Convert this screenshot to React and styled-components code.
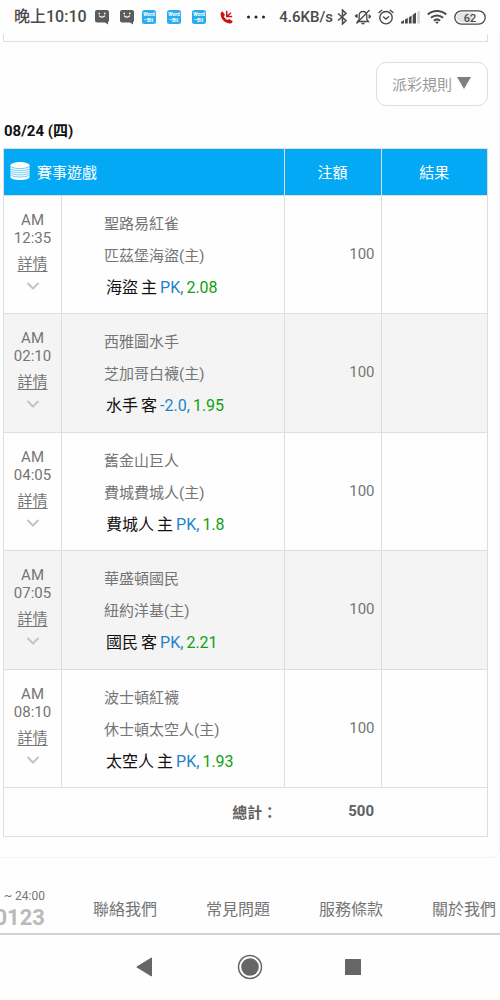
import React from "react";
import styled, { createGlobalStyle } from "styled-components";

const GlobalStyle = createGlobalStyle`
    * {
        box-sizing: border-box;
    }

    body {
        margin: 0;
        background: #fefefe;
        color: #757575;
        font-family: Roboto, "Noto Sans CJK TC", sans-serif;
        font-size: 15px;
    }

    svg {
        display: block;
        flex: none;
    }
`;

const StatusBar = styled.header`
    display: flex;
    align-items: center;
    justify-content: space-between;
    height: 34px;
    padding: 0 14px;
    color: #4a4a4a;
    font-weight: 500;
    white-space: nowrap;
`;

const StatusGroup = styled.div`
    display: flex;
    align-items: center;
    gap: ${(props) => props.$gap}px;
`;

const Clock = styled.span`
    font-size: 16px;
    line-height: 20px;
`;

const Speed = styled.span`
    font-size: 15px;
    line-height: 20px;
`;

const Card = styled.main`
    padding: 0 11px 20px 3px;
    border-right: 1px solid #f6f6f6;
    border-bottom: 1px solid #f3f3f3;
    border-radius: 0 0 8px 0;
`;

const PreviousPanel = styled.div`
    height: 8px;
    border: 1px solid #dedede;
    border-top: none;
`;

const Toolbar = styled.div`
    display: flex;
    justify-content: flex-end;
    padding: 20px 0 14px;
`;

const RulesButton = styled.button`
    display: flex;
    align-items: center;
    gap: 5px;
    height: 44px;
    padding: 0 16px 2px 15px;
    border: 1px solid #dedede;
    border-radius: 10px;
    background: #fff;
    color: #999;
    font: inherit;
    cursor: pointer;
`;

const DateTitle = styled.h2`
    margin: 0;
    padding: 0 0 6px 1px;
    color: #111;
    font-size: 15px;
    font-weight: 700;
    line-height: 22px;
`;

const BetTable = styled.table`
    width: 100%;
    table-layout: fixed;
    border: 1px solid #dedede;
    border-collapse: collapse;

    th,
    td {
        padding: 0;
        border: 1px solid #dedede;
    }
`;

const Column = styled.col`
    width: ${(props) => props.$width};
`;

const HeadCell = styled.th`
    && {
        height: 47px;
        padding-bottom: 2px;
    }

    background: #03a9f4;
    color: #fff;
    font-weight: 400;
`;

const HeadTitle = styled.div`
    display: flex;
    align-items: center;
    gap: 7px;
    padding-left: 6px;
`;

const BetRow = styled.tr`
    height: 118px;
    vertical-align: top;

    &:nth-child(even) {
        height: 119px;
        background: #f4f4f4;
    }
`;

const TimeBox = styled.div`
    display: flex;
    flex-direction: column;
    align-items: center;
    padding-top: 15px;
    line-height: 18px;
`;

const DetailLink = styled.a`
    display: flex;
    flex-direction: column;
    align-items: center;
    gap: 7px;
    padding-top: 6px;
    color: #757575;
    line-height: 22px;
    text-decoration: underline;
    text-underline-offset: 2px;
`;

const Match = styled.div`
    padding: 12px 0 0 42px;
    line-height: 32px;
`;

const Pick = styled.div`
    display: flex;
    gap: 3px;
    padding-left: 2px;
    color: #111;
    font-size: 16px;
`;

const Handicap = styled.span`
    color: #1a84cb;
`;

const Odds = styled.span`
    color: #12a012;
`;

const Amount = styled.div`
    padding: 48px 6px 0 0;
    line-height: 20px;
    text-align: right;
`;

const TotalRow = styled.tr`
    height: 49px;
    color: #616161;
    font-weight: 700;
    text-align: right;

    && td {
        padding: 0 7px 2px 0;
        border-left: none;
        border-right: none;
    }

    && td:first-child {
        border-left: 1px solid #dedede;
    }

    && td:last-child {
        border-right: 1px solid #dedede;
    }
`;

const Footer = styled.footer`
    display: flex;
    align-items: center;
    gap: 48px;
    height: 77px;
    padding: 24px 4px 0 0;
    border-bottom: 2px solid #d2d2d2;
`;

const Hotline = styled.div`
    display: flex;
    flex-direction: column;
    align-items: flex-end;
    flex: none;
    width: 45px;
    overflow: hidden;
    white-space: nowrap;
`;

const Hours = styled.span`
    font-size: 12px;
    line-height: 20px;
`;

const Phone = styled.strong`
    color: #bababa;
    font-size: 22px;
    line-height: 24px;
`;

const FooterLinks = styled.nav`
    display: flex;
    flex: 1;
    justify-content: space-between;
    white-space: nowrap;
`;

const FooterLink = styled.a`
    color: #757575;
    font-size: 16px;
    text-decoration: none;
`;

const SystemNav = styled.nav`
    display: flex;
    align-items: center;
    justify-content: center;
    gap: 78px;
    height: 65px;
    padding-bottom: 2px;
`;

const NavButton = styled.button`
    padding: 0;
    border: none;
    background: none;
    color: #666;
    cursor: pointer;
`;

const PhoneIcon = styled.svg`
    margin-left: 7px;
`;

const bets = [
    {
        time: "12:35",
        away: "聖路易紅雀",
        home: "匹茲堡海盜(主)",
        team: "海盜",
        side: "主",
        handicap: "PK,",
        odds: "2.08"
    },
    {
        time: "02:10",
        away: "西雅圖水手",
        home: "芝加哥白襪(主)",
        team: "水手",
        side: "客",
        handicap: "-2.0,",
        odds: "1.95"
    },
    {
        time: "04:05",
        away: "舊金山巨人",
        home: "費城費城人(主)",
        team: "費城人",
        side: "主",
        handicap: "PK,",
        odds: "1.8"
    },
    {
        time: "07:05",
        away: "華盛頓國民",
        home: "紐約洋基(主)",
        team: "國民",
        side: "客",
        handicap: "PK,",
        odds: "2.21"
    },
    {
        time: "08:10",
        away: "波士頓紅襪",
        home: "休士頓太空人(主)",
        team: "太空人",
        side: "主",
        handicap: "PK,",
        odds: "1.93"
    }
];

const footerLinks = ["聯絡我們", "常見問題", "服務條款", "關於我們"];

function ChatIcon() {
    return (
        <svg width="16" height="16" viewBox="0 0 16 16">
            <path
                d="M3 1h10a2 2 0 0 1 2 2v8.500a2 2 0 0 1-1 1.700V15.500L11 13.500H3a2 2 0 0 1-2-2V3a2 2 0 0 1 2-2z"
                fill="#5c5c5c"
            />
            <path
                d="M4.500 4.500h1.500M10 4.500h1.500M5.200 6.700c1.200 2 4.400 2 5.600 0"
                fill="none"
                stroke="#fff"
                strokeWidth="1.300"
            />
        </svg>
    );
}

function WordBitIcon() {
    return (
        <svg width="14" height="14" viewBox="0 0 14 14">
            <rect width="14" height="14" rx="2.500" fill="#29adec" />
            <g fill="#fff" fontFamily="Roboto" fontWeight="700" fontSize="5">
                <text x="7" y="6.300" textAnchor="middle">
                    Word
                </text>
                <text x="8" y="11.500" textAnchor="middle">
                    Bit
                </text>
            </g>
            <path d="M2.500 9.500h2" stroke="#fff" strokeWidth=".8" />
        </svg>
    );
}

function MissedCallIcon() {
    return (
        <PhoneIcon width="14" height="14" viewBox="0 0 14 14">
            <path
                d="M2.600 1.500 4.900 4.700 3.900 6.700c.8 1.400 1.900 2.500 3.400 3.300l2-1 3.300 2.300c-.2 1.400-1.100 2.200-2.600 2.200C4.900 13.300.5 8.900.6 3.800c0-1.200.8-2.100 2-2.300z"
                fill="#cc1414"
            />
            <path
                d="M6.700.7v5.800h5.500M6.900 6.300l4.100-3.600"
                fill="none"
                stroke="#cc1414"
                strokeWidth="1.500"
            />
        </PhoneIcon>
    );
}

function DotsIcon() {
    return (
        <svg width="20" height="4" viewBox="0 0 20 4" fill="#222">
            <circle cx="2.500" cy="2" r="1.500" />
            <circle cx="10" cy="2" r="1.500" />
            <circle cx="17.500" cy="2" r="1.500" />
        </svg>
    );
}

function BluetoothIcon() {
    return (
        <svg width="11" height="16" viewBox="0 0 11 16">
            <path
                d="M1 4.500 9 11.500 5.500 15V1L9 4.500 1 11.500"
                fill="none"
                stroke="#4a4a4a"
                strokeWidth="1.500"
            />
        </svg>
    );
}

function MutedBellIcon() {
    return (
        <svg width="16" height="16" viewBox="0 0 16 16">
            <g fill="none" stroke="#4a4a4a" strokeWidth="1.300">
                <path d="M2.500 12.500h11l-1.700-2.200V6.500C11.800 4 10.300 2.500 8 2.500S4.200 4 4.200 6.500v3.800z" />
                <path d="M14.500 1 1.500 14.500" />
                <path d="M2 5v4M14.200 5.500v4M.7 6v2M15.500 6.500v2" />
                <path d="M6.500 14.500h3" strokeWidth="1.600" />
            </g>
        </svg>
    );
}

function AlarmIcon() {
    return (
        <svg width="16" height="16" viewBox="0 0 16 16">
            <g
                fill="none"
                stroke="#4a4a4a"
                strokeWidth="1.400"
                strokeLinecap="round"
            >
                <circle cx="8" cy="8.700" r="6.200" />
                <path d="M5.500 8 8 10l2.700-2.200M1 3.500 3.800 1.200M15 3.500 12.200 1.200" />
            </g>
        </svg>
    );
}

function SignalIcon() {
    return (
        <svg width="19" height="14" viewBox="0 0 19 14" fill="#4a4a4a">
            <path d="M0 13.500v-1.500l3-2v3.500zM4 13.500V9.500L6.800 7.800v5.700zM7.900 13.500V7.200l2.700-1.800v8.100zM11.700 13.500V4.800L15 2.600v10.900z" />
            <path d="M16.200 13.500V2L19 .5v13z" fill="#d5d5d5" />
        </svg>
    );
}

function WifiIcon() {
    return (
        <svg width="20" height="16" viewBox="0 0 20 16">
            <g fill="none" stroke="#4a4a4a" strokeWidth="2">
                <path d="M.8 5.500c5.300-4.700 13.100-4.700 18.400 0" />
                <path d="M3.900 8.700c3.500-3.100 8.700-3.100 12.200 0" />
                <path d="M6.900 11.700c1.800-1.500 4.400-1.500 6.200 0" />
            </g>
            <path d="M8.200 13.200c1.100-.8 2.500-.8 3.600 0L10 15z" fill="#4a4a4a" />
        </svg>
    );
}

function BatteryIcon() {
    return (
        <svg width="32" height="15" viewBox="0 0 32 15">
            <rect
                x=".8"
                y=".8"
                width="30.400"
                height="13.400"
                rx="6.700"
                fill="#fff"
                stroke="#4a4a4a"
                strokeWidth="1.300"
            />
            <path
                d="M7.500 2.500H19v10H7.500a5 5 0 0 1 0-10z"
                fill="#e4e4e4"
            />
            <text
                x="16"
                y="11.500"
                textAnchor="middle"
                fill="#4a4a4a"
                fontSize="11"
                fontFamily="Roboto"
                fontWeight="500"
            >
                62
            </text>
        </svg>
    );
}

function CoinsIcon() {
    return (
        <svg width="20" height="20" viewBox="0 0 20 20">
            <path
                d="M.5 4v12c0 1.800 4.200 3 9.500 3s9.500-1.200 9.500-3V4z"
                fill="#fff"
            />
            <ellipse cx="10" cy="4" rx="9.500" ry="3" fill="#fff" />
            <g fill="none" stroke="#4fbff2" strokeWidth=".8">
                <path d="M.5 5.200c2 3.200 17 3.200 19 0" />
                <path d="M.5 7.300c2 3.200 17 3.200 19 0" />
                <path d="M.5 9.400c2 3.200 17 3.200 19 0" />
                <path d="M.5 11.500c2 3.200 17 3.200 19 0" />
                <path d="M.5 13.600c2 3.200 17 3.200 19 0" />
            </g>
        </svg>
    );
}

function ChevronIcon() {
    return (
        <svg width="14" height="8" viewBox="0 0 14 8">
            <path
                d="M1.500 1 7 6.500 12.500 1"
                fill="none"
                stroke="#c4c4c4"
                strokeWidth="2"
            />
        </svg>
    );
}

function Bet({ bet }) {
    return (
        <BetRow>
            <td>
                <TimeBox>
                    <span>AM</span>
                    <span>{bet.time}</span>
                    <DetailLink href="#detail">
                        詳情
                        <ChevronIcon />
                    </DetailLink>
                </TimeBox>
            </td>
            <td>
                <Match>
                    <div>{bet.away}</div>
                    <div>{bet.home}</div>
                    <Pick>
                        <span>{bet.team}</span>
                        <span>{bet.side}</span>
                        <Handicap>{bet.handicap}</Handicap>
                        <Odds>{bet.odds}</Odds>
                    </Pick>
                </Match>
            </td>
            <td>
                <Amount>100</Amount>
            </td>
            <td />
        </BetRow>
    );
}

function App() {
    return (
        <>
            <GlobalStyle />
            <StatusBar>
                <StatusGroup $gap={7}>
                    <Clock>晚上10:10</Clock>
                    <StatusGroup $gap={9}>
                        <ChatIcon />
                        <ChatIcon />
                    </StatusGroup>
                    <StatusGroup $gap={11}>
                        <WordBitIcon />
                        <WordBitIcon />
                        <WordBitIcon />
                    </StatusGroup>
                    <MissedCallIcon />
                </StatusGroup>
                <DotsIcon />
                <StatusGroup $gap={4}>
                    <Speed>4.6KB/s</Speed>
                    <StatusGroup $gap={7}>
                        <BluetoothIcon />
                        <MutedBellIcon />
                        <AlarmIcon />
                        <SignalIcon />
                        <WifiIcon />
                        <BatteryIcon />
                    </StatusGroup>
                </StatusGroup>
            </StatusBar>

            <Card>
                <PreviousPanel />
                <Toolbar>
                    <RulesButton type="button">
                        派彩規則
                        <svg width="14" height="12" viewBox="0 0 14 12">
                            <path d="M0 0h14L7 12z" fill="#808080" />
                        </svg>
                    </RulesButton>
                </Toolbar>
                <DateTitle>08/24 (四)</DateTitle>
                <BetTable>
                    <colgroup>
                        <Column $width="12%" />
                        <Column $width="46%" />
                        <Column $width="20%" />
                        <Column $width="22%" />
                    </colgroup>
                    <thead>
                        <tr>
                            <HeadCell colSpan={2}>
                                <HeadTitle>
                                    <CoinsIcon />
                                    賽事遊戲
                                </HeadTitle>
                            </HeadCell>
                            <HeadCell>注額</HeadCell>
                            <HeadCell>結果</HeadCell>
                        </tr>
                    </thead>
                    <tbody>
                        {bets.map((bet) => (
                            <Bet key={bet.time} bet={bet} />
                        ))}
                    </tbody>
                    <tfoot>
                        <TotalRow>
                            <td colSpan={2}>總計：</td>
                            <td>500</td>
                            <td />
                        </TotalRow>
                    </tfoot>
                </BetTable>
            </Card>

            <Footer>
                <Hotline>
                    <Hours>~ 24:00</Hours>
                    <Phone>0123</Phone>
                </Hotline>
                <FooterLinks>
                    {footerLinks.map((label) => (
                        <FooterLink key={label} href="#footer">
                            {label}
                        </FooterLink>
                    ))}
                </FooterLinks>
            </Footer>

            <SystemNav>
                <NavButton type="button" aria-label="Back">
                    <svg width="26" height="26" viewBox="0 0 26 26">
                        <path
                            d="M18.500 4v18L3.800 13z"
                            fill="currentColor"
                            stroke="currentColor"
                            strokeLinejoin="round"
                        />
                    </svg>
                </NavButton>
                <NavButton type="button" aria-label="Home">
                    <svg width="26" height="26" viewBox="0 0 26 26">
                        <circle
                            cx="13"
                            cy="13"
                            r="11.500"
                            fill="none"
                            stroke="currentColor"
                            strokeWidth="1.500"
                        />
                        <circle cx="13" cy="13" r="8.800" fill="currentColor" />
                    </svg>
                </NavButton>
                <NavButton type="button" aria-label="Recent apps">
                    <svg width="26" height="26" viewBox="0 0 26 26">
                        <rect
                            x="4"
                            y="5"
                            width="16"
                            height="16"
                            rx=".5"
                            fill="currentColor"
                        />
                    </svg>
                </NavButton>
            </SystemNav>
        </>
    );
}

export default App;
